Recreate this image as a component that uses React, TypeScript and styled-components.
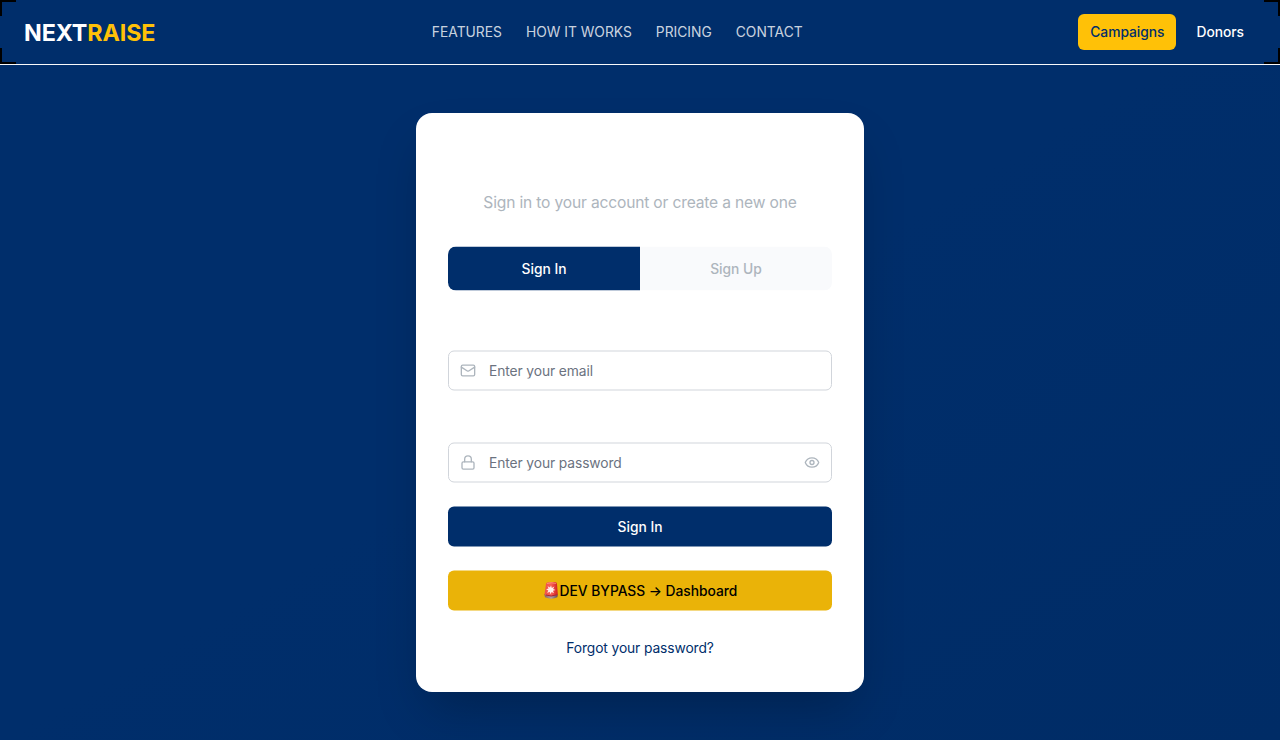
import React from 'react';
import styled, { createGlobalStyle } from 'styled-components';
import { Eye, Lock, Mail } from 'lucide-react';

const navy = '#002e6b';
const amber = '#ffc107';
const muted = '#adb5bd';
const small = '13.8px';

const GlobalStyle = createGlobalStyle`
  * { box-sizing: border-box; }
  body { margin: 0; font-family: Inter, "Liberation Sans", sans-serif; background: ${navy}; overflow: hidden; }
  button, input { font-family: inherit; }
`;

const Page = styled.div`
  height: 740px;
  display: flex;
  flex-direction: column;
  background: linear-gradient(to bottom right, #002e6b 0%, #002e6b 50%, #002c66 100%);
`;

const Header = styled.header`
  position: relative;
  height: 65px;
  flex: none;
  padding: 0 24px;
  border-bottom: 1px solid #f8f9fa;
  background: ${navy};
  display: grid;
  grid-template-columns: 1fr auto 1fr;
  align-items: center;
`;

const Corner = styled.span<{ $v: 'top' | 'bottom'; $h: 'left' | 'right' }>`
  position: absolute;
  width: 16px;
  height: 16px;
  ${(p) => p.$v}: 0;
  ${(p) => p.$h}: 0;
  border: 0 solid #000;
  border-${(p) => p.$v}-width: 2px;
  border-${(p) => p.$h}-width: 2px;
`;

const Logo = styled.div`
  padding-top: 2px;
  font-size: 23.3px;
  line-height: 32px;
  font-weight: 700;
  letter-spacing: -0.12px;
  color: #fff;
  span { color: ${amber}; }
`;

const Nav = styled.nav`
  display: flex;
  gap: 24px;
  margin-right: 45.5px;
`;

const NavLink = styled.a`
  font-size: ${small};
  line-height: 20px;
  letter-spacing: 0.01px;
  color: rgba(255, 255, 255, 0.8);
`;

const Actions = styled.div`
  display: flex;
  justify-content: flex-end;
  gap: 8px;
`;

const HeaderButton = styled.button<{ $filled?: boolean }>`
  height: 36px;
  padding: 0 12px 1px;
  border: 0;
  border-radius: 6px;
  font-size: ${small};
  font-weight: 500;
  letter-spacing: -0.03px;
  background: ${(p) => (p.$filled ? amber : 'transparent')};
  color: ${(p) => (p.$filled ? navy : '#fff')};
`;

const Main = styled.main`
  flex: 1;
  display: flex;
  justify-content: center;
  align-items: flex-start;
  padding-top: 48px;
`;

const Card = styled.section`
  width: 448px;
  height: 579px;
  padding: 77px 32px 32px;
  border-radius: 16px;
  background: #fff;
  box-shadow: 0 25px 50px -12px rgba(0, 0, 0, 0.25);
`;

const CardBody = styled.div`
  display: flex;
  flex-direction: column;
  transform: translateY(0.5px);
`;

const Subtitle = styled.p`
  margin: 0 0 32px;
  font-size: 15.6px;
  line-height: 24px;
  letter-spacing: -0.17px;
  text-align: center;
  color: ${muted};
`;

const Tabs = styled.div`
  display: grid;
  grid-template-columns: 1fr 1fr;
  height: 44px;
  margin-bottom: 60px;
  border-radius: 8px;
  overflow: hidden;
`;

const Tab = styled.button<{ $active?: boolean }>`
  border: 0;
  padding: 0 0 1px;
  font-size: ${small};
  font-weight: 500;
  background: ${(p) => (p.$active ? navy : '#f9fafc')};
  color: ${(p) => (p.$active ? '#fff' : muted)};
`;

const Field = styled.label<{ $gap: number }>`
  display: flex;
  align-items: center;
  gap: 13px;
  height: 40px;
  padding: 0 11px;
  margin-bottom: ${(p) => p.$gap}px;
  border: 1px solid #d1d5db;
  border-radius: 6px;
  color: ${muted};
  svg { flex: none; }
`;

const Input = styled.input`
  flex: 1;
  min-width: 0;
  height: 20px;
  padding: 0;
  border: 0;
  outline: 0;
  background: transparent;
  font-size: ${small};
  line-height: 20px;
  letter-spacing: -0.1px;
  &::placeholder { color: #6b7280; opacity: 1; }
`;

const WideButton = styled.button<{ $warn?: boolean }>`
  display: flex;
  align-items: center;
  justify-content: center;
  height: 40px;
  padding: 0 0 1px;
  margin-bottom: 24px;
  border: 0;
  border-radius: 6px;
  font-size: ${small};
  font-weight: 500;
  letter-spacing: -0.02px;
  background: ${(p) => (p.$warn ? '#eab308' : navy)};
  color: ${(p) => (p.$warn ? '#000' : '#fff')};
`;

const Siren = styled.svg`
  width: 17px;
  height: 18px;
`;

const ForgotLink = styled.a`
  align-self: center;
  margin-top: 3px;
  font-size: ${small};
  line-height: 20px;
  letter-spacing: -0.1px;
  color: ${navy};
`;

const SirenIcon = () => (
  <Siren viewBox="0 0 17 18">
    <defs>
      <linearGradient id="glass" x1="0" x2="1">
        <stop offset="0" stopColor="#ed5148" />
        <stop offset="0.5" stopColor="#fa6055" />
        <stop offset="1" stopColor="#cf1d20" />
      </linearGradient>
      <linearGradient id="base" x1="0" x2="1">
        <stop offset="0" stopColor="#8b5962" />
        <stop offset="0.5" stopColor="#a9a0aa" />
        <stop offset="1" stopColor="#66424c" />
      </linearGradient>
    </defs>
    <path d="M1.3 12.5 15 12.8 14.3 15.8Q8.5 18.6 2 15.8Z" fill="url(#base)" />
    <path d="M3 2.2Q3.4.9 5.2.8L12 .4Q13.8.4 14 2.4L14.8 13Q8 16.5 1.5 13Z" fill="url(#glass)" />
    <path d="M4 2Q8 .7 13 1.9" fill="none" stroke="#ff9a87" strokeWidth="0.8" />
    <path d="m8 4 .8 2.4 2.6-1.3-1.3 2.4 2.4 1.1-2.5.7.9 2.5-2.3-1.3-1.1 2.2-.8-2.4-2.5 1.1 1.1-2.5-2.2-1.1 2.5-.7-1-2.4 2.4 1.3z" fill="#fff0eb" />
    <path d="M3 13.5Q8 15.6 13.7 13.3" fill="none" stroke="#a82532" strokeWidth="1" />
  </Siren>
);

export default function App() {
  return (
    <Page>
      <GlobalStyle />
      <Header>
        <Corner $v="top" $h="left" />
        <Corner $v="top" $h="right" />
        <Corner $v="bottom" $h="left" />
        <Corner $v="bottom" $h="right" />
        <Logo>NEXT<span>RAISE</span></Logo>
        <Nav>
          <NavLink>FEATURES</NavLink>
          <NavLink>HOW IT WORKS</NavLink>
          <NavLink>PRICING</NavLink>
          <NavLink>CONTACT</NavLink>
        </Nav>
        <Actions>
          <HeaderButton $filled>Campaigns</HeaderButton>
          <HeaderButton>Donors</HeaderButton>
        </Actions>
      </Header>
      <Main>
        <Card>
          <CardBody>
            <Subtitle>Sign in to your account or create a new one</Subtitle>
            <Tabs>
              <Tab $active>Sign In</Tab>
              <Tab>Sign Up</Tab>
            </Tabs>
            <Field $gap={52}>
              <Mail size={16} />
              <Input type="email" placeholder="Enter your email" />
            </Field>
            <Field $gap={24}>
              <Lock size={16} />
              <Input type="password" placeholder="Enter your password" />
              <Eye size={16} />
            </Field>
            <WideButton>Sign In</WideButton>
            <WideButton $warn><SirenIcon />DEV BYPASS → Dashboard</WideButton>
            <ForgotLink>Forgot your password?</ForgotLink>
          </CardBody>
        </Card>
      </Main>
    </Page>
  );
}
